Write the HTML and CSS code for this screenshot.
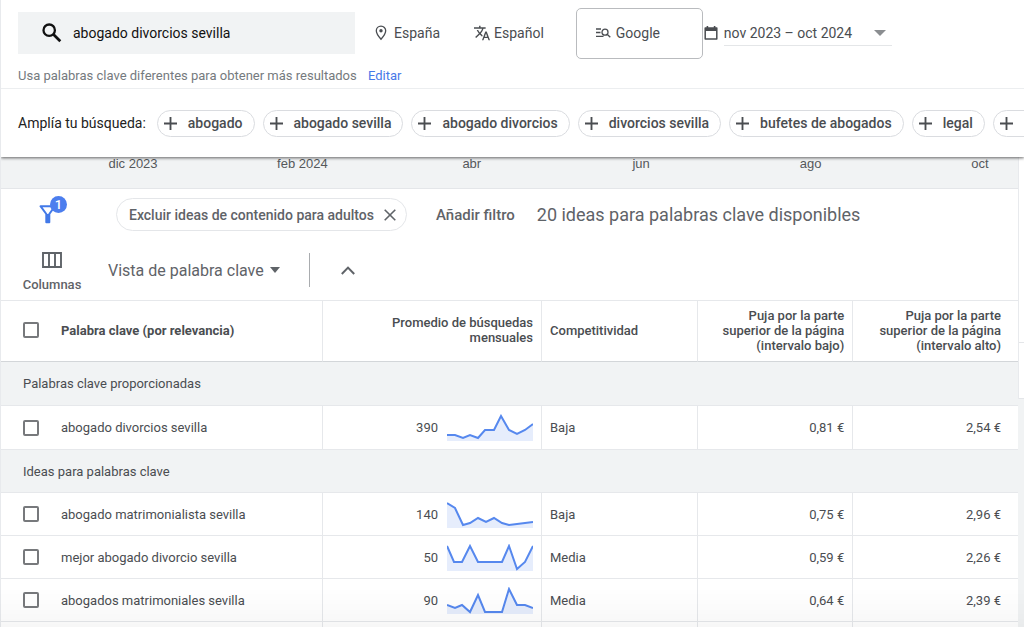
FILE: index.html
```html
<!DOCTYPE html>
<html lang="es">
<head>
<meta charset="utf-8">
<title>Planificador de palabras clave</title>
<link rel="stylesheet" href="styles.css">
</head>
<body>
<header class="top">
  <div class="search-row">
    <label class="search">
      <svg class="search-icon" viewBox="0 0 20 20" aria-hidden="true"><circle cx="7.2" cy="7.2" r="5.7" fill="none" stroke="currentColor" stroke-width="2.3"/><path d="M11.3 11.3 18.3 18.3" stroke="currentColor" stroke-width="2.7"/></svg>
      <input class="search-input" type="text" value="abogado divorcios sevilla" aria-label="Palabras clave">
    </label>
    <button class="setting place">
      <svg width="12" height="16" viewBox="0 0 12 16" aria-hidden="true"><path d="M6 1.2C3.3 1.2 1.3 3.2 1.3 5.8 1.3 9 6 14.3 6 14.3s4.7-5.300 4.700-8.500C10.700 3.200 8.700 1.200 6 1.200Z" fill="none" stroke="currentColor" stroke-width="1.300"/><circle cx="6" cy="5.700" r="1.700" fill="currentColor"/></svg>
      España
    </button>
    <button class="setting language">
      <svg width="16" height="16" viewBox="1 1 22 22" aria-hidden="true"><path fill="currentColor" d="M12.870 15.070l-2.540-2.510.030-.030c1.740-1.940 2.980-4.170 3.710-6.530H17V4h-7V2H8v2H1v1.990h11.170C11.500 7.920 10.440 9.750 9 11.350 8.070 10.320 7.300 9.190 6.690 8h-2c.730 1.630 1.730 3.170 2.980 4.560l-5.090 5.020L4 19l5-5 3.110 3.110.760-2.040zM18.500 10h-2L12 22h2l1.120-3h4.750L21 22h2l-4.500-12zm-2.620 7l1.620-4.330L19.120 17h-3.240z"/></svg>
      Español
    </button>
    <button class="setting network">
      <svg width="15" height="12" viewBox="0 0 15 12" aria-hidden="true"><g fill="none" stroke="currentColor" stroke-width="1.300"><path d="M0 2h5M0 5.500h4.500M0 9.300h7.500"/><circle cx="9" cy="5.200" r="3"/><path d="M11.100 7.200 14.300 10.300"/></g></svg>
      Google
    </button>
    <div class="period">
      <svg width="14" height="16" viewBox="0 0 14 16" aria-hidden="true"><path d="M1.200 3h11.600v11H1.200Z" fill="none" stroke="currentColor" stroke-width="1.500" stroke-linejoin="round"/><path d="M1 3h12v3H1ZM2.600 1h1.600v2H2.600ZM9.800 1h1.600v2H9.800Z" fill="currentColor"/></svg>
      <div class="period-field">
        <select class="period-select" aria-label="Periodo"><option>nov 2023 – oct 2024</option></select>
        <svg class="caret" width="12" height="6" viewBox="0 0 12 6" aria-hidden="true"><path d="M0 0h12L6 6Z" fill="#8b8e91"/></svg>
      </div>
    </div>
  </div>
  <p class="hint">Usa palabras clave diferentes para obtener más resultados <a class="edit" href="#">Editar</a></p>
  <div class="broaden">
    <span class="broaden-title">Amplía tu búsqueda:</span>
    <button class="chip"><svg class="plus" viewBox="0 0 14 14" aria-hidden="true"><path d="M7 0v14M0 7h14"/></svg>abogado</button>
    <button class="chip"><svg class="plus" viewBox="0 0 14 14" aria-hidden="true"><path d="M7 0v14M0 7h14"/></svg>abogado sevilla</button>
    <button class="chip"><svg class="plus" viewBox="0 0 14 14" aria-hidden="true"><path d="M7 0v14M0 7h14"/></svg>abogado divorcios</button>
    <button class="chip"><svg class="plus" viewBox="0 0 14 14" aria-hidden="true"><path d="M7 0v14M0 7h14"/></svg>divorcios sevilla</button>
    <button class="chip"><svg class="plus" viewBox="0 0 14 14" aria-hidden="true"><path d="M7 0v14M0 7h14"/></svg>bufetes de abogados</button>
    <button class="chip"><svg class="plus" viewBox="0 0 14 14" aria-hidden="true"><path d="M7 0v14M0 7h14"/></svg>legal</button>
    <button class="chip chip-cut" aria-label="Más"><svg class="plus" viewBox="0 0 14 14" aria-hidden="true"><path d="M7 0v14M0 7h14"/></svg></button>
  </div>
</header>
<div class="body">
  <main class="panel">
    <div class="axis"><span>dic 2023</span><span>feb 2024</span><span>abr</span><span>jun</span><span>ago</span><span>oct</span></div>
    <div class="tools">
      <div class="filters">
        <button class="filter-button" aria-label="Filtros">
          <svg width="18" height="19" viewBox="0 0 18 19" aria-hidden="true"><path d="M1.500 1.200h14.500L10.300 9v8.300H7.300V9Z" fill="none" stroke="currentColor" stroke-width="2" stroke-linejoin="round"/><path d="M7.300 9h3v8.300h-3Z" fill="currentColor"/></svg>
          <span class="badge">1</span>
        </button>
        <div class="filter-chip">
          <span>Excluir ideas de contenido para adultos</span>
          <button class="remove" aria-label="Quitar filtro"><svg width="12" height="12" viewBox="0 0 12 12" aria-hidden="true"><path d="M.700.700l10.600 10.600M11.300.700.700 11.300" stroke="currentColor" stroke-width="1.600"/></svg></button>
        </div>
        <button class="add-filter">Añadir filtro</button>
        <span class="available">20 ideas para palabras clave disponibles</span>
      </div>
      <div class="views">
        <button class="columns">
          <svg width="20" height="16" viewBox="0 0 20 16" aria-hidden="true"><path d="M1 1h18v14H1ZM7 1v14M13 1v14" fill="none" stroke="currentColor" stroke-width="1.900"/></svg>
          Columnas
        </button>
        <div class="view-field">
          <select class="view-select" aria-label="Vista"><option>Vista de palabra clave</option></select>
          <svg class="caret" width="10" height="6" viewBox="0 0 10 6" aria-hidden="true"><path d="M0 0h10L5 6Z" fill="currentColor"/></svg>
        </div>
        <button class="collapse" aria-label="Contraer"><svg width="14" height="9" viewBox="0 0 14 9" aria-hidden="true"><path d="M.800 8 7 1.600 13.200 8" fill="none" stroke="currentColor" stroke-width="2"/></svg></button>
      </div>
    </div>
    <table class="keywords">
      <colgroup><col class="c-key"><col class="c-avg"><col class="c-comp"><col class="c-low"><col class="c-high"></colgroup>
      <thead>
        <tr>
          <th class="key"><label class="pick strong"><input type="checkbox">Palabra clave (por relevancia)</label></th>
          <th class="num">Promedio de búsquedas mensuales</th>
          <th>Competitividad</th>
          <th class="num">Puja por la parte superior de la página (intervalo bajo)</th>
          <th class="num last">Puja por la parte superior de la página (intervalo alto)</th>
        </tr>
      </thead>
      <tbody class="given">
        <tr class="group"><td colspan="5">Palabras clave proporcionadas</td></tr>
        <tr>
          <td class="key"><label class="pick"><input type="checkbox">abogado divorcios sevilla</label></td>
          <td class="num"><div class="trend">390<svg class="spark" viewBox="0 0 86 27" aria-hidden="true"><path class="area" d="M0 21h8l8 3 7-3 8 3 7-8h9l7-14 8 14 8 4 8-4 8-6v17H0Z"/><path class="line" d="M0 21h8l8 3 7-3 8 3 7-8h9l7-14 8 14 8 4 8-4 8-6"/></svg></div></td>
          <td>Baja</td><td class="num">0,81 €</td><td class="num last">2,54 €</td>
        </tr>
      </tbody>
      <tbody>
        <tr class="group"><td colspan="5">Ideas para palabras clave</td></tr>
        <tr>
          <td class="key"><label class="pick"><input type="checkbox">abogado matrimonialista sevilla</label></td>
          <td class="num"><div class="trend">140<svg class="spark" viewBox="0 0 86 27" aria-hidden="true"><path class="area" d="M0 2 8 7 16 24 23 22 31 17 39 21 47 17 55 22 62 24 70 23 78 22 86 21V27H0Z"/><path class="line" d="M0 2 8 7 16 24 23 22 31 17 39 21 47 17 55 22 62 24 70 23 78 22 86 21"/></svg></div></td>
          <td>Baja</td><td class="num">0,75 €</td><td class="num last">2,96 €</td>
        </tr>
        <tr>
          <td class="key"><label class="pick"><input type="checkbox">mejor abogado divorcio sevilla</label></td>
          <td class="num"><div class="trend">50<svg class="spark" viewBox="0 0 86 27" aria-hidden="true"><path class="area" d="M0 2 7 18H15L23 2 31 18H55L62 2 70 25 78 18 86 2V27H0Z"/><path class="line" d="M0 2 7 18H15L23 2 31 18H55L62 2 70 25 78 18 86 2"/></svg></div></td>
          <td>Media</td><td class="num">0,59 €</td><td class="num last">2,26 €</td>
        </tr>
        <tr>
          <td class="key"><label class="pick"><input type="checkbox">abogados matrimoniales sevilla</label></td>
          <td class="num"><div class="trend">90<svg class="spark" viewBox="0 0 86 27" aria-hidden="true"><path class="area" d="M0 18 8 21 15 18 23 25 31 8 38 25H55L62 2 70 18H78L86 21V27H0Z"/><path class="line" d="M0 18 8 21 15 18 23 25 31 8 38 25H55L62 2 70 18H78L86 21"/></svg></div></td>
          <td>Media</td><td class="num">0,64 €</td><td class="num last">2,39 €</td>
        </tr>
        <tr><td></td><td></td><td></td><td></td><td class="last"></td></tr>
      </tbody>
    </table>
  </main>
  <aside class="side"><div class="side-top"></div><div class="side-bottom"></div></aside>
</div>
<div class="fade"></div>
</body>
</html>
```
FILE: styles.css
```css
* { box-sizing: border-box; }

body {
  margin: 0;
  height: 100vh;
  overflow: hidden;
  background: #f1f3f4;
  border-left: 1px solid #e8eaed;
  color: #4a4d51;
  font-family: Roboto, "Liberation Sans", sans-serif;
  font-size: 13px;
}

button, input, select {
  margin: 0;
  padding: 0;
  border: 0;
  background: none;
  color: inherit;
  font: inherit;
}

select { appearance: none; }
svg { display: block; flex: none; }

.top {
  position: relative;
  z-index: 1;
  background: #fff;
  box-shadow: 0 1px 3px rgba(0, 0, 0, .6);
}

.search-row {
  display: flex;
  align-items: center;
  height: 66px;
  padding-left: 17px;
  font-size: 14px;
}

.search {
  display: flex;
  align-items: center;
  gap: 11px;
  width: 337px;
  height: 42px;
  padding-left: 24px;
  background: #f1f3f4;
  color: #111;
}
.search-icon { width: 20px; height: 20px; }
.search-input { flex: 1; min-width: 0; }

.setting { display: flex; align-items: center; }
.place { gap: 7px; margin-left: 20px; }
.language { gap: 4px; margin-left: 34px; }
.network {
  gap: 5px;
  width: 127px;
  height: 51px;
  margin-left: 32px;
  padding-left: 19px;
  border: 1px solid #b9bbbe;
  border-radius: 5px;
}

.period { display: flex; align-items: center; gap: 6px; margin-left: 1px; }
.period-field {
  position: relative;
  width: 168px;
  border-bottom: 1px solid #e4e6e8;
}
.period-select { width: 100%; height: 25px; }
.caret { position: absolute; right: 6px; top: 10px; pointer-events: none; }

.hint {
  margin: 0;
  height: 23px;
  padding-left: 17px;
  border-bottom: 1px solid #eceef0;
  color: #757a7e;
  line-height: 19px;
}
.edit { margin-left: 8px; color: #4779e8; text-decoration: none; }

.broaden {
  display: flex;
  align-items: center;
  gap: 8px;
  height: 68px;
  padding-left: 17px;
  overflow: hidden;
  white-space: nowrap;
  font-size: 14px;
}
.broaden-title { margin-right: 3px; color: #222; }
.chip {
  display: flex;
  flex: none;
  align-items: center;
  gap: 11px;
  height: 27px;
  padding: 0 11px 0 6px;
  border: 1px solid #dadce0;
  border-radius: 14px;
  font-weight: 500;
}
.chip-cut { width: 98px; }
.plus {
  width: 13px;
  height: 13px;
  fill: none;
  stroke: currentColor;
  stroke-width: 2;
}

.body { display: flex; align-items: flex-start; }
.panel { flex: 1; min-width: 0; background: #fff; }

.axis {
  display: flex;
  justify-content: space-between;
  height: 32px;
  padding: 0 10px 0 104px;
  border-bottom: 1px solid #e4e6e9;
  background: #f1f3f4;
  color: #55585b;
  font-family: "Liberation Sans", Arial, sans-serif;
  line-height: 14px;
}
.axis span { width: 56px; text-align: center; }

.tools { color: #5f6368; font-weight: 500; }
.filters { display: flex; align-items: center; height: 51px; padding-left: 38px; }
.filter-button { position: relative; width: 29px; color: #4279e8; }
.badge {
  position: absolute;
  top: -9px;
  left: 11px;
  width: 17px;
  height: 17px;
  border-radius: 50%;
  background: #4c7eee;
  color: #fff;
  font-size: 13px;
  line-height: 17px;
}
.filter-chip {
  display: flex;
  align-items: center;
  gap: 10px;
  height: 33px;
  margin-left: 48px;
  padding: 0 10px 0 12px;
  border: 1px solid #e4e6e9;
  border-radius: 17px;
  font-size: 14px;
}
.add-filter { margin-left: 29px; font-size: 15px; }
.available { margin-left: 22px; font-size: 18px; font-weight: 400; }

.views { display: flex; align-items: center; height: 60px; padding-left: 21px; }
.columns {
  display: flex;
  flex-direction: column;
  align-items: center;
  gap: 9px;
  width: 60px;
  padding-top: 3px;
}
.view-field { position: relative; width: 172px; margin-left: 26px; font-size: 16px; font-weight: 400; }
.view-select { width: 100%; }
.view-field .caret { right: 0; top: 6px; }
.collapse {
  display: flex;
  align-items: center;
  height: 34px;
  margin-left: 29px;
  padding-left: 31px;
  border-left: 1px solid #a9acaf;
}

.keywords {
  width: 100%;
  table-layout: fixed;
  border-collapse: separate;
  border-spacing: 0;
}
.c-key { width: 31.700%; }
.c-avg { width: 21.500%; }
.c-comp { width: 15.300%; }
.c-low { width: 15.300%; }
.keywords th, .keywords td {
  padding: 0 8px;
  border-bottom: 1px solid #e6e8eb;
  border-right: 1px solid #e6e8eb;
  text-align: left;
}
.keywords th {
  height: 62px;
  padding-bottom: 2px;
  border-top: 1px solid #e6e8eb;
  border-bottom: 1px solid #d3d6d9;
  font-weight: 500;
  line-height: 15px;
}
.keywords td { height: 43px; }
.keywords .given td { height: 44px; }
.keywords .num { text-align: right; }
.keywords .key { padding-left: 22px; }
.keywords .last { padding-right: 17px; border-right: 0; }
.keywords .group td { padding-left: 22px; border-right: 0; background: #f1f3f4; }

.pick { display: flex; align-items: center; gap: 22px; }
.keywords .strong { font-weight: 700; }
.pick input {
  appearance: none;
  width: 16px;
  height: 16px;
  border: 2px solid #77797c;
  border-radius: 2px;
}

.trend { display: flex; align-items: center; justify-content: flex-end; gap: 9px; }
.spark { width: 86px; height: 27px; }
.area { fill: #e6edfc; }
.line { fill: none; stroke: #5688ee; stroke-width: 2; }

.side { width: 6px; border-left: 1px solid #e8eaed; }
.side-top { height: 186px; background: #fff; border-bottom: 1px solid #e4e6e9; }
.side-bottom { height: 56px; background: #fff; border-bottom: 1px solid #e4e6e9; }

.fade {
  position: fixed;
  right: 0;
  bottom: 0;
  left: 0;
  height: 40px;
  background: linear-gradient(rgba(0, 0, 0, 0), rgba(0, 0, 0, .03));
  pointer-events: none;
}
```
